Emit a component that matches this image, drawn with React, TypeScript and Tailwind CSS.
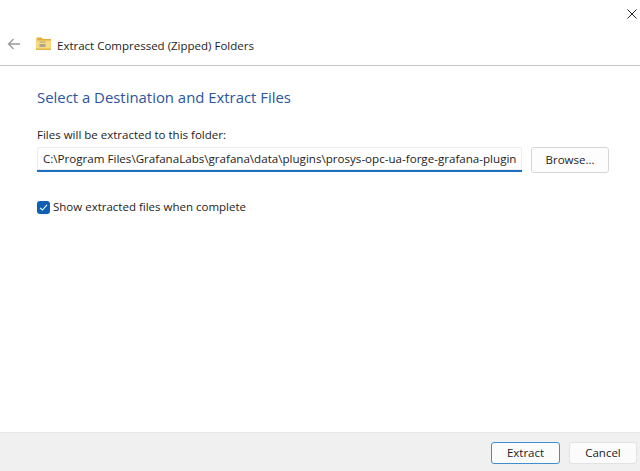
const font = "font-['Open_Sans','Noto_Sans',sans-serif]";

function FolderIcon() {
  return (
    <svg width="15" height="13" viewBox="0 0 15 13" className="shrink-0">
      <path d="M0.5 0.5h5l1.5 1.5h8V4H0.5z" fill="#e3ae35" />
      <rect x="0" y="3.5" width="15" height="9" fill="#f9da80" />
      <rect x="0" y="11.5" width="15" height="1.5" fill="#e3b44a" />
      <rect x="3.5" y="4" width="6" height="2" fill="#c9bd8c" />
      <rect x="3.5" y="7" width="6" height="3" fill="#a8a690" />
    </svg>
  );
}

export default function App() {
  return (
    <div className={`flex h-[471px] w-[640px] flex-col overflow-hidden bg-white text-[#1c1c1c] ${font}`}>
      <div className="flex h-[28px] justify-end pr-[3px] pt-[9px]">
        <svg width="10" height="10" viewBox="0 0 10 10" fill="none" stroke="#222" strokeWidth="1">
          <path d="M0.5 0.5 9.5 9.5M9.5 0.5 0.5 9.5" />
        </svg>
      </div>

      <div className="flex h-[38px] items-start border-b border-[#c4c4c4] pl-[7px] pt-[9px]">
        <svg width="14" height="14" viewBox="0 0 14 14" fill="none" stroke="#9a9a9a" strokeWidth="1.3" className="mr-[15px] shrink-0">
          <path d="M13 7H1.5M6.5 2 1.5 7l5 5" />
        </svg>
        <FolderIcon />
        <div className="ml-[6px] text-[11.5px] leading-[18px]">Extract Compressed (Zipped) Folders</div>
      </div>

      <div className="flex-1 pl-[37px] pr-[31px] pt-[20px]">
        <div className="text-[14.9px] leading-[22px] text-[#2b559f]">Select a Destination and Extract Files</div>

        <div className="mt-[18px] text-[11.5px] leading-[18px]">Files will be extracted to this folder:</div>

        <div className="mt-[3px] flex items-start gap-[9px]">
          <div className="flex h-[25px] w-[485px] items-center overflow-hidden whitespace-nowrap rounded-t-[3px] border-b-2 border-[#1a6fc0] bg-white pl-[6px] text-[11.6px] shadow-[inset_0_0_0_1px_#ececec]">
            C:\Program Files\GrafanaLabs\grafana\data\plugins\prosys-opc-ua-forge-grafana-plugin
          </div>
          <div className="flex h-[26px] w-[78px] items-center justify-center rounded-[3px] border border-[#d6d6d6] bg-[#fdfdfd] text-[11.5px]">
            Browse...
          </div>
        </div>

        <div className="mt-[25px] flex items-center gap-[3px]">
          <div className="flex h-[13px] w-[13px] items-center justify-center rounded-[3px] bg-[#0f5fb5]">
            <svg width="9" height="9" viewBox="0 0 9 9" fill="none" stroke="#fff" strokeWidth="1.1">
              <path d="M1 4.8 3.4 7 8 1.8" />
            </svg>
          </div>
          <div className="text-[11.5px] leading-[18px]">Show extracted files when complete</div>
        </div>
      </div>

      <div className="flex h-[39px] items-start justify-end gap-[9px] border-t border-[#e6e6e6] bg-[#f0f0f0] pr-[3px] pt-[9px]">
        <div className="flex h-[22px] w-[69px] items-center justify-center rounded-[3px] border border-[#3f8fd0] bg-[#fbfbfb] text-[11.5px]">
          Extract
        </div>
        <div className="flex h-[22px] w-[68px] items-center justify-center rounded-[3px] border border-[#e2e2e2] bg-[#fbfbfb] text-[11.5px]">
          Cancel
        </div>
      </div>
    </div>
  );
}
